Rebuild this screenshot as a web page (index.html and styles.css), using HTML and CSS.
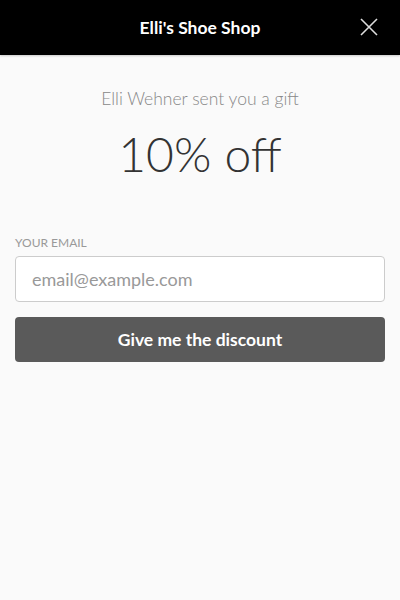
FILE: index.html
```html
<!DOCTYPE html>
<html>
    <head>
        <title>Elli's Shoe Shop</title>
        <link rel="stylesheet" href="styles.css">
    </head>
    <body>
        <div class = "header">
            <span class = "shop">Elli's Shoe Shop</span>
            <button class = "close" type = "button">
                <svg width="18" height="18" viewBox="0 0 18 18">
                    <path d="M1 1 L17 17 M17 1 L1 17" stroke="#dddddd" stroke-width="1.6" fill="none"/>
                </svg>
            </button>
        </div>

        <div class = "content">
            <p class = "sender">Elli Wehner sent you a gift</p>
            <p class = "offer">10% off</p>

            <form class = "signup" action="/claim" method = "POST">
                <label class = "label" for = "iptEmail">YOUR EMAIL</label>
                <input id = "iptEmail" class = "email" type="email" name="email" placeholder = "email@example.com">
                <button class = "submit" type = "submit">Give me the discount</button>
            </form>
        </div>
    </body>
</html>
```

FILE: styles.css
```css
body {
    background-color: #fafafa;
    font-family: Lato, "Open Sans", sans-serif;
    margin: 0;
}

.header {
    align-items: center;
    background-color: black;
    box-shadow: 0 1px 2px rgba(0, 0, 0, 0.2);
    display: flex;
    height: 55px;
    justify-content: center;
    position: relative;
}

.shop {
    color: white;
    font-size: 17.5px;
    font-weight: 700;
}

.close {
    background: none;
    border: none;
    height: 18px;
    padding: 0;
    position: absolute;
    right: 22px;
    top: 18px;
    width: 18px;
}

.content {
    padding: 0 15px;
    text-align: center;
}

.sender {
    color: #888888;
    font-size: 17.5px;
    font-weight: 300;
    margin: 33px 0 0 0;
}

.offer {
    color: #333333;
    font-size: 48px;
    font-weight: 300;
    line-height: 60px;
    margin: 15px 0 0 0;
}

.signup {
    display: flex;
    flex-direction: column;
    margin-top: 52px;
    text-align: left;
}

.label {
    color: #999999;
    font-size: 12px;
    line-height: 14px;
    margin-bottom: 6px;
}

.email {
    background-color: white;
    border: 1px solid #cccccc;
    border-radius: 4px;
    box-sizing: border-box;
    color: #333333;
    font-family: Lato, sans-serif;
    font-size: 18px;
    height: 46px;
    padding: 0 16px;
}

.email::placeholder {
    color: #999999;
}

.submit {
    background-color: #5a5a5a;
    border: none;
    border-radius: 4px;
    color: white;
    font-family: Lato, sans-serif;
    font-size: 17.5px;
    font-weight: 700;
    height: 45px;
    margin-top: 15px;
}
```
